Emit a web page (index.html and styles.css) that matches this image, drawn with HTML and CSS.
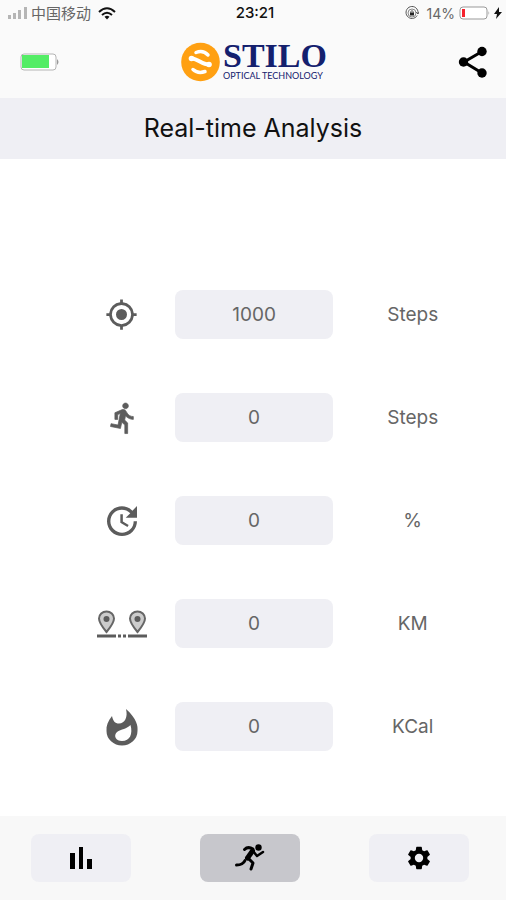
FILE: index.html
```html
<!DOCTYPE html>
<html lang="en">
<head>
  <meta charset="UTF-8" />
  <meta name="viewport" content="width=device-width, initial-scale=1.0"/>
  <title>Real-time Analysis</title>
  <link rel="stylesheet" href="styles.css">
</head>
<body>

  <!-- Phone status bar -->
  <div class="status-bar">
    <div class="status-left">
      <svg class="signal" width="20" height="12" viewBox="0 0 20 12" fill="#b5b5b5">
        <rect x="0" y="8" width="3" height="4"/><rect x="5" y="6" width="3" height="6"/>
        <rect x="10" y="3" width="3" height="9"/><rect x="16" y="0" width="3" height="12"/>
      </svg>
      <span class="carrier">中国移动</span>
      <svg width="18" height="13" viewBox="0 0 18 13" fill="none" stroke="#111" stroke-width="2">
        <path d="M1 5Q9-2.500 17 5M4 8Q9 3.500 14 8"/>
        <path d="M6.500 9.800Q9 7.800 11.500 9.800L9 12.500Z" fill="#111" stroke="none"/>
      </svg>
    </div>
    <span class="time">23:21</span>
    <div class="status-right">
      <svg class="lock" width="14" height="14" viewBox="0 0 14 14" fill="none" stroke="#555">
        <path d="M12.200 9.500A6 6 0 1 1 13 7M11 6l2 2 1-2"/>
        <circle cx="7" cy="7" r="4" stroke="#888"/>
        <path d="M5 6.500h4v3H5z" fill="#222" stroke="none"/><path d="M5.800 7V5.500Q7 3.800 8.200 5.500V7"/>
      </svg>
      <span class="percent">14%</span>
      <svg width="31" height="14" viewBox="0 0 31 14">
        <rect x="1" y="1" width="27" height="12" rx="3" fill="#fff" stroke="#999"/>
        <rect x="3" y="3" width="3" height="8" fill="#f5222d"/>
        <path d="M29.500 5v4q1.500-2 0-4" fill="#999"/>
      </svg>
      <svg width="8" height="12" viewBox="0 0 8 12"><path d="M5 0L0 7h3L2 12 8 5H5z" fill="#111"/></svg>
    </div>
  </div>

  <header class="header">
    <svg class="device-battery" width="40" height="18" viewBox="0 0 40 18">
      <rect x="1" y="1" width="35" height="16" rx="3" fill="#fff" stroke="#b4b4b4"/>
      <rect x="2" y="2" width="27" height="13" fill="#53ed65"/>
      <path d="M37 6v6q3-3 0-6" fill="#999"/>
    </svg>
    <div class="logo">
      <svg width="39" height="40" viewBox="0 0 39 40">
        <circle cx="19.500" cy="20" r="19.300" fill="#ffa012"/>
        <g fill="none" stroke="#fff" stroke-linecap="round">
          <path d="M15 10.500Q22 7.500 27 13" stroke-width="3.500"/>
          <path d="M11 16.500C17 17 22 23 28 22.500" stroke-width="4"/>
          <path d="M12 27.500Q17 32 24 29.500" stroke-width="3.500"/>
        </g>
        <circle cx="10.500" cy="16.500" r="2.800" fill="#fff"/><circle cx="28" cy="22.500" r="2.800" fill="#fff"/>
      </svg>
      <div class="logo-text">
        <span class="logo-name">STILO</span>
        <span class="logo-tag">OPTICAL TECHNOLOGY</span>
      </div>
    </div>
    <button class="share-btn" type="button" aria-label="Share">
      <svg width="30" height="32" viewBox="0 0 30 32">
        <path d="M24 5.500L6 16l18 11" fill="none" stroke="#000" stroke-width="3"/>
        <circle cx="24" cy="5.500" r="4.700"/><circle cx="5.500" cy="16" r="4.700"/><circle cx="24" cy="27" r="4.700"/>
      </svg>
    </button>
  </header>

  <h1 class="title">Real-time Analysis</h1>

  <main class="stats">
    <div class="row">
      <svg class="icon" width="33" height="33" viewBox="0 0 24 24">
        <path d="M12 8a4 4 0 1 0 0 8 4 4 0 0 0 0-8zm8.940 3A8.990 8.990 0 0 0 13 3.060V1h-2v2.060A8.990 8.990 0 0 0 3.060 11H1v2h2.060A8.990 8.990 0 0 0 11 20.940V23h2v-2.060A8.990 8.990 0 0 0 20.940 13H23v-2h-2.060zM12 19a7 7 0 1 1 0-14 7 7 0 0 1 0 14z"/>
      </svg>
      <input type="text" id="goal" value="1000" />
      <label for="goal">Steps</label>
    </div>
    <div class="row">
      <svg class="icon" width="34" height="34" viewBox="-1 0 24 24">
        <path d="M13.490 5.480c1.100 0 2-.900 2-2s-.900-2-2-2-2 .900-2 2 .900 2 2 2zm-3.600 13.900l1-4.400 2.100 2v6h2v-7.500l-2.100-2 .600-3c1.300 1.500 3.300 2.500 5.500 2.500v-2c-1.900 0-3.500-1-4.300-2.400l-1-1.600c-.400-.600-1-1-1.700-1-.300 0-.500.100-.800.100l-5.200 2.200v4.700h2v-3.400l1.800-.700-1.600 8.100-4.900-1-.400 2 7 1.400z" stroke="#5c5c5c" stroke-width=".5"/>
      </svg>
      <input type="text" id="steps" value="0" readonly />
      <label for="steps">Steps</label>
    </div>
    <div class="row">
      <svg class="icon" width="40" height="40" viewBox="0 0 24 24">
        <path d="M21 10.120h-6.780l2.740-2.820c-2.730-2.700-7.150-2.800-9.880-.100-2.730 2.710-2.730 7.080 0 9.790s7.150 2.710 9.880 0C18.320 15.650 19 14.080 19 12.100h2c0 1.980-.880 4.550-2.640 6.290-3.510 3.480-9.210 3.480-12.720 0-3.500-3.470-3.530-9.110-.020-12.580s9.140-3.470 12.650 0L21 3v7.120zM12.500 8v4.250l3.500 2.080-.720 1.210L11 13V8h1.500z"/>
      </svg>
      <input type="text" id="percent" value="0" readonly />
      <label for="percent">%</label>
    </div>
    <div class="row">
      <svg class="icon" width="50" height="28" viewBox="0 0 50 28">
        <g fill="#ccc" stroke="#666" stroke-width="2">
          <path d="M9.500 22Q2 13 2 8.500a7.500 7 0 0 1 15 0Q17 13 9.500 22z"/>
          <path d="M40.500 22Q33 13 33 8.500a7.500 7 0 0 1 15 0Q48 13 40.500 22z"/>
        </g>
        <circle cx="9.500" cy="9" r="3"/><circle cx="40.500" cy="9" r="3"/>
        <path d="M0 24.500h19v3H0zM21 24.500h3v3h-3zM26 24.500h3v3h-3zM31 24.500h19v3H31z"/>
      </svg>
      <input type="text" id="distance" value="0" readonly />
      <label for="distance">KM</label>
    </div>
    <div class="row">
      <svg class="icon" width="32" height="38" viewBox="0 0 32 38">
        <path fill-rule="evenodd" d="M20 1C31 11 32 18 31.500 23A15.500 14.500 0 0 1 .500 23C0 18 2 13 6 8C7 13 9 15.500 13 15.500C19 15.500 22 9 20 1zM24.500 17C21 21 15 21 11 24C7 28 10 33 16 33C24 33 27 26 24.500 17z"/>
      </svg>
      <input type="text" id="calories" value="0" readonly />
      <label for="calories">KCal</label>
    </div>
  </main>

  <nav class="tabs">
    <button type="button" class="tab" aria-label="Statistics">
      <svg width="22" height="22" viewBox="0 0 22 22">
        <path d="M0 6h5v16H0zM9 0h4v22H9zM17 12h5v10h-5z"/>
      </svg>
    </button>
    <button type="button" class="tab active" aria-label="Real-time">
      <svg width="30" height="28" viewBox="0 0 30 28" fill="none" stroke="#000" stroke-width="3" stroke-linecap="round" stroke-linejoin="round">
        <path d="M9.500 5.500Q13 2 18 5L13 14l5 5-2 6"/>
        <path d="M1.500 21Q8 21 10 16.500"/>
        <path d="M18 7l4 5 6-4" stroke-width="2.500"/>
        <path d="M17.500 7l-5 7" stroke-width="5"/>
        <circle cx="23.500" cy="3.500" r="3.200" fill="#000" stroke="none"/>
      </svg>
    </button>
    <button type="button" class="tab" aria-label="Settings">
      <svg width="28" height="28" viewBox="0 0 24 24">
        <path d="M19.140 12.940c.040-.300.060-.610.060-.940s-.020-.640-.070-.940l2.030-1.580c.180-.140.230-.410.120-.610l-1.920-3.320c-.120-.220-.370-.290-.590-.220l-2.390.960c-.500-.380-1.030-.700-1.620-.940l-.360-2.540c-.040-.240-.240-.410-.480-.410h-3.840c-.240 0-.430.170-.470.410l-.360 2.540c-.590.240-1.130.570-1.620.940l-2.390-.960c-.220-.080-.470 0-.590.220L2.740 8.870c-.120.210-.080.470.120.610l2.030 1.580c-.050.300-.090.630-.090.940s.020.640.070.940l-2.030 1.580c-.180.140-.230.410-.120.610l1.920 3.320c.120.220.370.290.590.220l2.390-.960c.500.380 1.030.700 1.620.940l.360 2.540c.050.240.240.410.480.410h3.840c.240 0 .440-.170.470-.410l.360-2.540c.590-.240 1.130-.560 1.620-.940l2.390.960c.220.080.470 0 .590-.220l1.920-3.320c.120-.220.070-.470-.120-.610l-2.010-1.580zM12 15.600a3.600 3.600 0 1 1 0-7.200 3.600 3.600 0 0 1 0 7.200z"/>
      </svg>
    </button>
  </nav>

</body>
</html>
```

FILE: styles.css
```css
* {
  box-sizing: border-box;
}
body {
  font-family: Inter, 'Noto Sans CJK SC', sans-serif;
  background: #fff;
  margin: 0;
  min-height: 100vh;
  display: flex;
  flex-direction: column;
}
svg {
  display: block;
  flex-shrink: 0;
}
.status-bar {
  display: grid;
  grid-template-columns: 1fr auto 1fr;
  align-items: center;
  height: 26px;
  padding: 0 4px 0 8px;
  background: #fafafa;
  font-size: 14px;
}
.status-left {
  display: flex;
  align-items: center;
  gap: 3px;
}
.carrier {
  font-family: 'Noto Sans CJK SC', sans-serif;
  font-size: 15px;
  line-height: 24px;
  color: #666;
}
.status-left svg:last-child {
  margin-left: 4px;
}
.time {
  font-size: 15px;
  line-height: 24px;
  font-weight: 500;
  color: #111;
}
.status-right {
  display: flex;
  align-items: center;
  justify-content: flex-end;
  gap: 4px;
}
.percent {
  color: #666;
  margin-left: 4px;
}
.header {
  display: grid;
  grid-template-columns: 1fr auto 1fr;
  align-items: center;
  height: 72px;
  padding: 0 18px 0 20px;
  background: #fafafa;
}
.logo {
  display: flex;
  align-items: center;
  gap: 3px;
}
.logo-text {
  display: flex;
  flex-direction: column;
  color: #14206e;
}
.logo-name {
  font-family: 'Liberation Serif', serif;
  font-size: 34px;
  font-weight: bold;
  line-height: 28px;
}
.logo-tag {
  font-family: Lato, sans-serif;
  font-size: 9px;
  line-height: 12px;
  white-space: nowrap;
}
.share-btn {
  justify-self: end;
  padding: 0;
  border: none;
  background: none;
  cursor: pointer;
}
.title {
  margin: 0;
  font-size: 25px;
  font-weight: 400;
  line-height: 61px;
  text-align: center;
  color: #111;
  background: #efeff4;
}
.stats {
  flex: 1;
  display: flex;
  flex-direction: column;
  justify-content: flex-end;
  gap: 54px;
  padding: 64px 14px 65px 69px;
}
.row {
  display: grid;
  grid-template-columns: 2fr 3fr 3fr;
  align-items: center;
  height: 49px;
}
.icon {
  justify-self: center;
  fill: #5c5c5c;
}
.row input {
  width: 100%;
  height: 49px;
  padding: 0;
  border: none;
  border-radius: 8px;
  background: #efeff4;
  font-family: inherit;
  font-size: 19px;
  text-align: center;
  color: #666;
}
.row label {
  font-size: 19px;
  text-align: center;
  color: #666;
}
.tabs {
  display: flex;
  justify-content: space-between;
  padding: 18px 37px 18px 31px;
  background: #f8f8f8;
}
.tab {
  display: flex;
  align-items: center;
  justify-content: center;
  width: 100px;
  height: 48px;
  padding: 0;
  border: none;
  border-radius: 8px;
  background: #efeff4;
  cursor: pointer;
}
.tab.active {
  background: #c7c7cc;
}
```
